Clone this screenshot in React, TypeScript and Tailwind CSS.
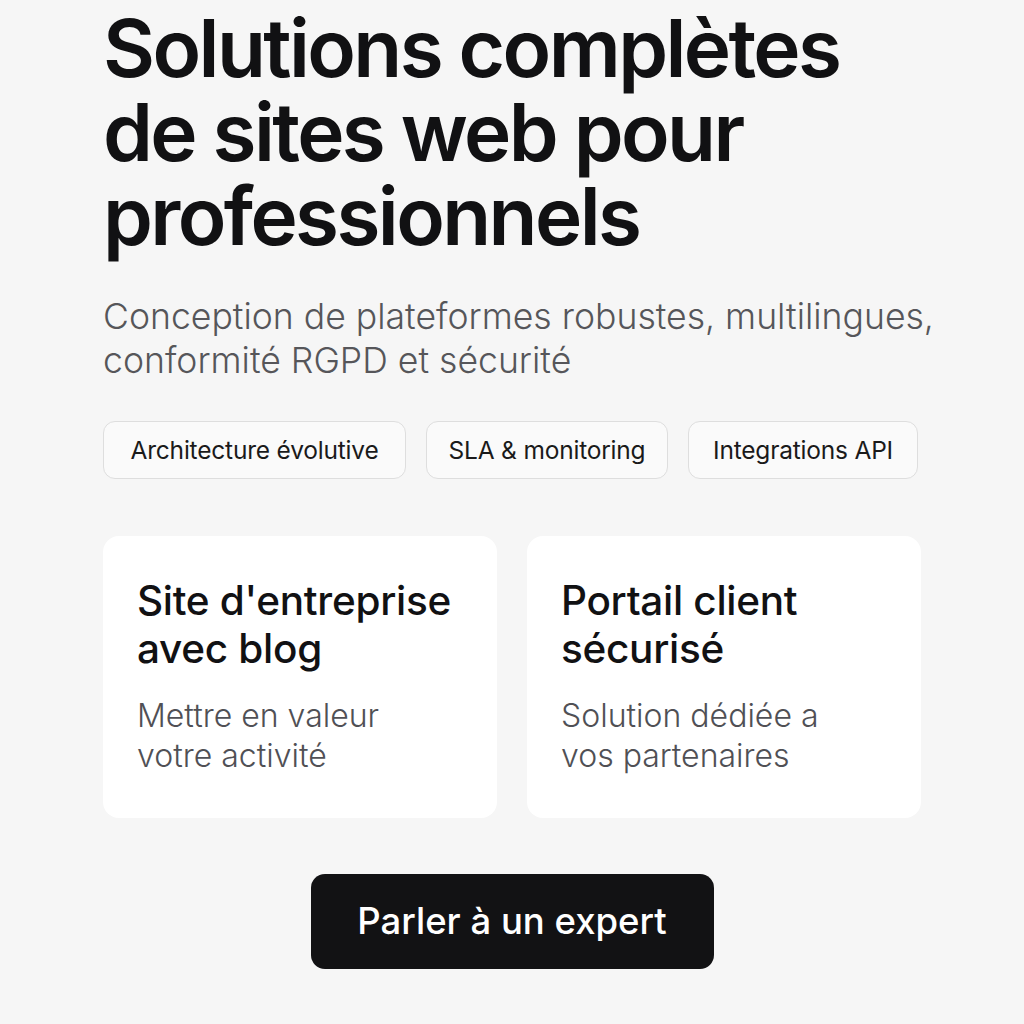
const chips = [
  { label: "Architecture évolutive", width: "w-[303px]" },
  { label: "SLA & monitoring", width: "w-[242px]" },
  { label: "Integrations API", width: "w-[230px]" },
]

const offres = [
  {
    id: "site",
    title: "Site d'entreprise avec blog",
    description: "Mettre en valeur votre activité",
  },
  {
    id: "portail",
    title: "Portail client sécurisé",
    description: "Solution dédiée a vos partenaires",
  },
]

export default function App() {
  return (
    <div className="min-h-screen bg-[#f6f6f6] font-['Inter',sans-serif] text-[#111113]">
      <div className="w-[880px] pl-[103px] box-content pt-[6px]">
        <h1 className="w-[830px] text-[80px] leading-[84px] font-semibold tracking-[-2.6px]">
          Solutions complètes de sites web pour professionnels
        </h1>
        <p className="mt-[37px] text-[35.6px] leading-[44px] font-light text-[#56565a]">
          Conception de plateformes robustes, multilingues, conformité RGPD et sécurité
        </p>

        <div className="mt-[38px] flex gap-5">
          {chips.map((chip) => (
            <span
              key={chip.label}
              className={`${chip.width} h-[58px] flex items-center justify-center rounded-xl border border-[#dedede] bg-[#fafafa] text-[24.5px] tracking-[-0.2px] text-[#1a1a1a]`}
            >
              {chip.label}
            </span>
          ))}
        </div>

        <div className="mt-[57px] grid grid-cols-2 gap-[30px] w-[818px]">
          {offres.map((item) => (
            <div key={item.id} className="h-[282px] rounded-2xl bg-white px-[34px] pt-[41px]">
              <h2 className="text-[40.5px] leading-[48px] font-medium tracking-[-0.3px]">{item.title}</h2>
              <p className="mt-[23px] max-w-[300px] text-[32px] leading-[40px] font-light text-[#505055]">
                {item.description}
              </p>
            </div>
          ))}
        </div>

        <div className="mt-[56px] w-[818px] flex justify-center">
          <button className="w-[403px] h-[95px] rounded-[14px] bg-[#121214] text-white text-[36.5px] font-medium">
            Parler à un expert
          </button>
        </div>
      </div>
    </div>
  )
}
